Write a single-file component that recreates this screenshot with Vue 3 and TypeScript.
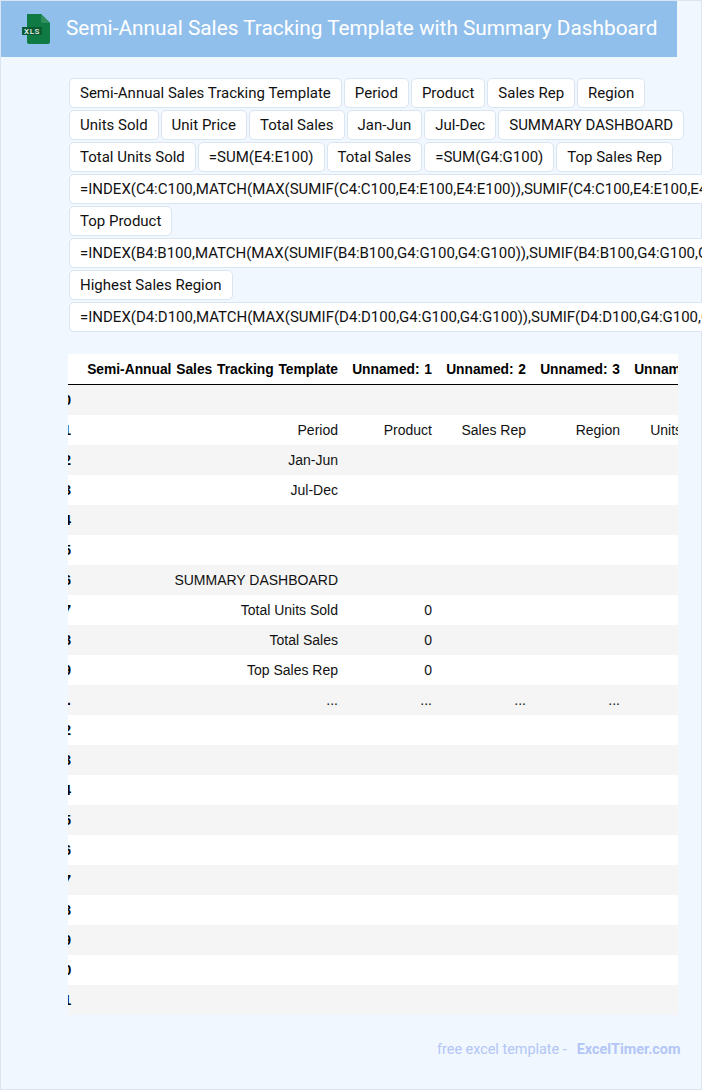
<script setup lang="ts">
const tagRows: string[] = [
  'Semi-Annual Sales Tracking Template', 'Period', 'Product', 'Sales Rep', 'Region',
  'Units Sold', 'Unit Price', 'Total Sales', 'Jan-Jun', 'Jul-Dec', 'SUMMARY DASHBOARD',
  'Total Units Sold', '=SUM(E4:E100)', 'Total Sales', '=SUM(G4:G100)', 'Top Sales Rep',
  '=INDEX(C4:C100,MATCH(MAX(SUMIF(C4:C100,E4:E100,E4:E100)),SUMIF(C4:C100,E4:E100,E4:E100),0))',
  'Top Product',
  '=INDEX(B4:B100,MATCH(MAX(SUMIF(B4:B100,G4:G100,G4:G100)),SUMIF(B4:B100,G4:G100,G4:G100),0))',
  'Highest Sales Region',
  '=INDEX(D4:D100,MATCH(MAX(SUMIF(D4:D100,G4:G100,G4:G100)),SUMIF(D4:D100,G4:G100,G4:G100),0))',
]

const headers: string[] = ['', 'Semi-Annual Sales Tracking Template', 'Unnamed: 1', 'Unnamed: 2', 'Unnamed: 3', 'Unnamed: 4']

const rows: string[][] = [
  ['0', '', '', '', '', ''],
  ['1', 'Period', 'Product', 'Sales Rep', 'Region', 'Units Sold'],
  ['2', 'Jan-Jun', '', '', '', ''],
  ['3', 'Jul-Dec', '', '', '', ''],
  ['4', '', '', '', '', ''],
  ['5', '', '', '', '', ''],
  ['6', 'SUMMARY DASHBOARD', '', '', '', ''],
  ['7', 'Total Units Sold', '0', '', '', ''],
  ['8', 'Total Sales', '0', '', '', ''],
  ['9', 'Top Sales Rep', '0', '', '', ''],
  ['...', '...', '...', '...', '...', '...'],
  ['92', '', '', '', '', ''],
  ['93', '', '', '', '', ''],
  ['94', '', '', '', '', ''],
  ['95', '', '', '', '', ''],
  ['96', '', '', '', '', ''],
  ['97', '', '', '', '', ''],
  ['98', '', '', '', '', ''],
  ['99', '', '', '', '', ''],
  ['100', '', '', '', '', ''],
  ['101', '', '', '', '', ''],
]
</script>

<template>
  <div class="page">
    <header class="banner">
      <svg class="file-icon" width="30" height="32" viewBox="0 0 30 32" aria-hidden="true">
        <path d="M6 1h14l9 9v19a2 2 0 0 1-2 2H8a2 2 0 0 1-2-2z" fill="#0f7a43" />
        <path d="M20 1l9 9h-7a2 2 0 0 1-2-2z" fill="#2f8f5e" />
        <rect x="1" y="14" width="20" height="8" fill="#0b5a32" />
        <text x="11" y="21" class="file-label" text-anchor="middle">XLS</text>
      </svg>
      <h1 class="title">Semi-Annual Sales Tracking Template with Summary Dashboard</h1>
    </header>

    <section class="tags">
      <span v-for="(tag, i) in tagRows" :key="i" class="tag">{{ tag }}</span>
    </section>

    <section class="table-wrap">
      <table class="sheet">
        <thead>
          <tr>
            <th v-for="(h, i) in headers" :key="i" :class="'col' + i">{{ h }}</th>
          </tr>
        </thead>
        <tbody>
          <tr v-for="(row, r) in rows" :key="r">
            <template v-for="(cell, c) in row" :key="c">
              <th v-if="c === 0" class="col0">{{ cell }}</th>
              <td v-else :class="'col' + c">{{ cell }}</td>
            </template>
          </tr>
        </tbody>
      </table>
    </section>

    <footer class="foot">
      <span class="foot-text">free excel template -</span>
      <span class="foot-brand">ExcelTimer.com</span>
    </footer>
  </div>
</template>

<style>
html, body { margin: 0; overflow: hidden; }
</style>

<style scoped>
.page {
  box-sizing: border-box;
  width: 702px;
  height: 1090px;
  border: 1px solid #dbe5f1;
  background: #f0f7ff;
  font-family: Roboto, sans-serif;
}
.banner {
  width: 676px;
  height: 56px;
  background: #91bfec;
  display: flex;
  align-items: center;
  box-sizing: border-box;
  padding-left: 20px;
}
.file-icon { flex: none; margin-top: -1px; }
.file-label {
  font: 500 8px Roboto, sans-serif;
  letter-spacing: 0.6px;
  fill: #e8f3ec;
}
.title {
  margin: -2px 0 0 15px;
  font-size: 20.8px;
  font-weight: 400;
  color: #fff;
  white-space: nowrap;
}
.tags {
  margin: 21px 0 0 68px;
  display: flex;
  flex-wrap: wrap;
  gap: 2px;
  width: 632px;
}
.tag {
  box-sizing: border-box;
  height: 30px;
  padding: 0 10px;
  line-height: 28px;
  font-size: 15px;
  color: #111;
  background: #fff;
  border: 1px solid #dbe5f1;
  border-radius: 5px;
  white-space: nowrap;
}
.table-wrap {
  margin: 22px 0 0 67px;
  width: 610px;
  height: 661px;
  overflow: hidden;
  background: #fff;
}
.sheet {
  width: 680px;
  margin-left: -27px;
  border-collapse: separate;
  border-spacing: 0;
  table-layout: fixed;
  font: 14px "Liberation Sans", Arial, sans-serif;
  color: #111;
}
.sheet th, .sheet td {
  padding: 0 7px;
  height: 30px;
  text-align: right;
  white-space: nowrap;
  box-sizing: border-box;
}
.sheet thead th {
  font-weight: 700;
  font-size: 13.8px;
  word-spacing: 0.9px;
  color: #000;
  height: 31px;
  border-bottom: 1px solid #000;
}
.sheet tbody th { font-weight: 700; color: #000; }
.sheet tbody tr:nth-child(odd) { background: #f5f5f5; }
.col0 { width: 37px; }
.col1 { width: 267px; }
.col2, .col3, .col4, .col5 { width: 94px; }
.foot {
  margin: 27px 0 0 436px;
  display: flex;
  font-size: 14.4px;
  color: #b3c6f5;
  line-height: 16px;
  white-space: nowrap;
}
.foot-brand { margin-left: 10px; font-weight: 700; }
</style>
